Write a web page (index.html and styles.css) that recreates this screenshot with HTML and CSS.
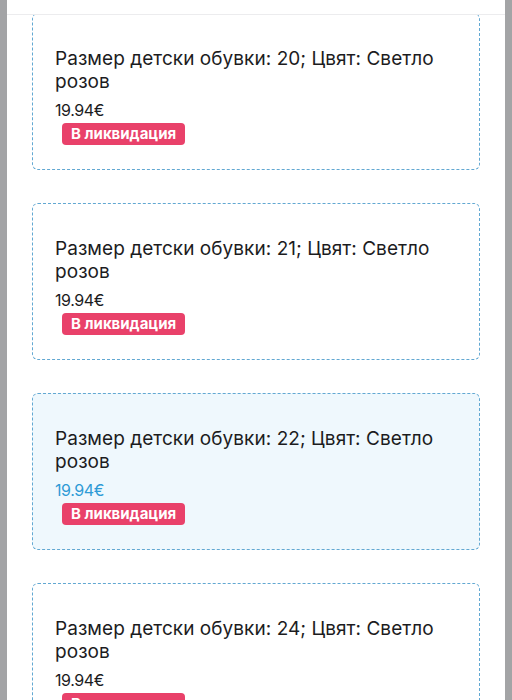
FILE: index.html
```html
<!DOCTYPE html>
<html lang="bg">
<head>
<meta charset="utf-8">
<link rel="stylesheet" href="styles.css">
</head>
<body>
<div class="panel">
  <div class="header"></div>
  <div class="list">
    <div class="card">
      <div class="title">Размер детски обувки: 20; Цвят: Светло розов</div>
      <div class="price">19.94€</div>
      <span class="badge">В ликвидация</span>
    </div>
    <div class="card">
      <div class="title">Размер детски обувки: 21; Цвят: Светло розов</div>
      <div class="price">19.94€</div>
      <span class="badge">В ликвидация</span>
    </div>
    <div class="card card-active">
      <div class="title">Размер детски обувки: 22; Цвят: Светло розов</div>
      <div class="price">19.94€</div>
      <span class="badge">В ликвидация</span>
    </div>
    <div class="card">
      <div class="title">Размер детски обувки: 24; Цвят: Светло розов</div>
      <div class="price">19.94€</div>
      <span class="badge">В ликвидация</span>
    </div>
  </div>
</div>
</body>
</html>
```
FILE: styles.css
```css
html, body {
  margin: 0;
  padding: 0;
  height: 100%;
  overflow: hidden;
}
body {
  background: #a3a4a6;
  font-family: Inter, "Noto Sans", sans-serif;
  color: #1c1c1e;
}
.panel {
  position: relative;
  margin: 0 7px;
  background: #ffffff;
  min-height: 100%;
}
.header {
  position: absolute;
  top: 0;
  left: 0;
  right: 0;
  height: 14px;
  background: #ffffff;
  border-bottom: 1px solid #ececee;
  z-index: 2;
}
.list {
  padding: 13px 25px 0;
  display: flex;
  flex-direction: column;
  gap: 33px;
}
.card {
  height: 157px;
  box-sizing: border-box;
  border: 1px dashed #62a8d2;
  border-radius: 6px;
  padding: 33px 22px 0;
  background: #ffffff;
}
.card-active {
  background: #eff8fd;
}
.title {
  font-size: 19px;
  line-height: 23px;
  letter-spacing: 0.05px;
}
.price {
  margin-top: 6px;
  font-size: 16px;
  line-height: 22px;
  letter-spacing: -0.4px;
}
.card-active .price {
  color: #2e9bd6;
}
.badge {
  display: inline-block;
  margin: 2px 0 0 7px;
  height: 22px;
  line-height: 22px;
  padding: 0 9px;
  border-radius: 4px;
  background: #e9416a;
  color: #ffffff;
  font-size: 15px;
  font-weight: 700;
  vertical-align: top;
}
```
